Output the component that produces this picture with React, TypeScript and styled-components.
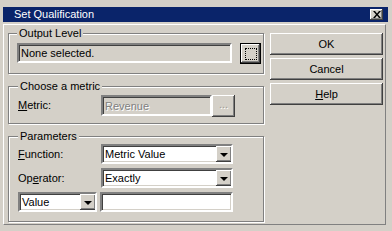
import styled, { createGlobalStyle } from 'styled-components';

const GlobalStyle = createGlobalStyle`
  html, body {
    margin: 0;
    padding: 0;
    background: #d4d0c8;
  }
  body {
    font-family: 'Liberation Sans', Arial, sans-serif;
    font-size: 11px;
    color: #000;
  }
`;

const raised = `
  box-shadow: inset -1px -1px 0 #404040, inset 1px 1px 0 #ffffff,
    inset -2px -2px 0 #808080, inset 2px 2px 0 #d4d0c8;
`;

const Window = styled.div`
  width: 392px;
  height: 231px;
  box-sizing: border-box;
  padding: 7px 4px 0 3px;
  background: #d4d0c8;
  display: flex;
  flex-direction: column;
`;

const TitleBar = styled.div`
  height: 15px;
  background: #0a246a;
  color: #fff;
  display: flex;
  align-items: center;
  justify-content: space-between;
  padding: 0 5px 0 11px;
  line-height: 15px;
`;

const CloseBox = styled.div`
  width: 13px;
  height: 11px;
  background: #d4d0c8;
  ${raised}
  display: flex;
  align-items: center;
  justify-content: center;
`;

const Body = styled.div`
  margin: 2px 2px 0 0;
  border-top: 1px solid #fff;
  border-left: 1px solid #fff;
  border-right: 1px solid #808080;
  border-bottom: 1px solid #808080;
  padding: 2px 1px 2px 4px;
  display: flex;
  gap: 6px;
`;

const LeftColumn = styled.div`
  width: 256px;
  display: flex;
  flex-direction: column;
  gap: 6px;
`;

const Group = styled.fieldset<{ $pad: string }>`
  margin: 0;
  min-width: 0;
  padding: ${(p) => p.$pad};
  border: 1px solid #808080;
  box-shadow: 1px 1px 0 #fff, inset 1px 1px 0 #fff;
`;

const Legend = styled.legend`
  padding: 0 2px;
  line-height: 13px;
  background: #d4d0c8;
`;

const Row = styled.div<{ $gap?: number }>`
  display: flex;
  align-items: flex-start;
  gap: ${(p) => p.$gap ?? 0}px;
`;

const Rows = styled.div`
  display: flex;
  flex-direction: column;
  gap: 4px;
`;

const Label = styled.div`
  width: 83px;
  flex: none;
  line-height: 20px;
`;

const Field = styled.div<{ $w: number; $h?: number; $white?: boolean; $disabled?: boolean }>`
  box-sizing: border-box;
  width: ${(p) => p.$w}px;
  height: ${(p) => p.$h ?? 20}px;
  flex: none;
  border: 2px solid;
  border-color: #808080 #fff #fff #808080;
  box-shadow: inset 1px 1px 0 #404040, inset -1px -1px 0 #d4d0c8;
  background: ${(p) => (p.$white ? '#fff' : '#d4d0c8')};
  color: ${(p) => (p.$disabled ? '#808080' : '#000')};
  text-shadow: ${(p) => (p.$disabled ? '1px 1px 0 #fff' : 'none')};
  display: flex;
  align-items: center;
  justify-content: space-between;
  padding-left: 2px;
  line-height: 14px;
  white-space: nowrap;
  overflow: hidden;
`;

const DropButton = styled.div`
  width: 16px;
  height: 16px;
  flex: none;
  background: #d4d0c8;
  ${raised}
  display: flex;
  align-items: center;
  justify-content: center;
  margin-right: -1px;
  &::after {
    content: '';
    border-left: 4px solid transparent;
    border-right: 4px solid transparent;
    border-top: 4px solid #000;
    margin-top: 1px;
  }
`;

const BrowseButton = styled.div`
  box-sizing: border-box;
  width: 21px;
  height: 21px;
  flex: none;
  border: 1px solid #000;
  background: #d4d0c8;
  ${raised}
  display: flex;
  align-items: center;
  justify-content: center;
`;

const FocusRect = styled.span`
  width: 10px;
  height: 10px;
  border: 1px dotted #000;
`;

const SmallButton = styled.div`
  width: 23px;
  height: 22px;
  flex: none;
  background: #d4d0c8;
  ${raised}
  color: #a09c94;
  text-shadow: 1px 1px 0 #fff;
  text-align: center;
  line-height: 18px;
`;

const ButtonColumn = styled.div`
  width: 113px;
  margin-top: 6px;
  display: flex;
  flex-direction: column;
  gap: 3px;
`;

const Button = styled.button`
  height: 22px;
  padding: 0;
  border: none;
  background: #d4d0c8;
  ${raised}
  font: inherit;
  color: #000;
`;

function Combo({ width, value }: { width: number; value: string }) {
  return (
    <Field $w={width} $white>
      <span>{value}</span>
      <DropButton />
    </Field>
  );
}

export default function App() {
  return (
    <Window>
      <GlobalStyle />
      <TitleBar>
        <span>Set Qualification</span>
        <CloseBox>
          <svg width="8" height="7" viewBox="0 0 8 7">
            <path d="M0 0h2l2 2.5L6 0h2L5 3.5 8 7H6L4 4.5 2 7H0l3-3.5z" fill="#000" />
          </svg>
        </CloseBox>
      </TitleBar>
      <Body>
        <LeftColumn>
          <Group $pad="3px 1px 9px 8px">
            <Legend>Output Level</Legend>
            <Row $gap={8}>
              <Field $w={215}>None selected.</Field>
              <BrowseButton>
                <FocusRect />
              </BrowseButton>
            </Row>
          </Group>
          <Group $pad="2px 1px 6px 9px">
            <Legend>Choose a metric</Legend>
            <Row>
              <Label>
                <u>M</u>etric:
              </Label>
              <Field $w={111} $h={21} $disabled>
                Revenue
              </Field>
              <SmallButton>...</SmallButton>
            </Row>
          </Group>
          <Group $pad="1px 1px 9px 9px">
            <Legend>Parameters</Legend>
            <Rows>
              <Row>
                <Label>
                  <u>F</u>unction:
                </Label>
                <Combo width={132} value="Metric Value" />
              </Row>
              <Row>
                <Label>
                  Op<u>e</u>rator:
                </Label>
                <Combo width={132} value="Exactly" />
              </Row>
              <Row $gap={3}>
                <Combo width={79} value="Value" />
                <Field $w={133} $white />
              </Row>
            </Rows>
          </Group>
        </LeftColumn>
        <ButtonColumn>
          <Button>OK</Button>
          <Button>Cancel</Button>
          <Button>
            <u>H</u>elp
          </Button>
        </ButtonColumn>
      </Body>
    </Window>
  );
}
